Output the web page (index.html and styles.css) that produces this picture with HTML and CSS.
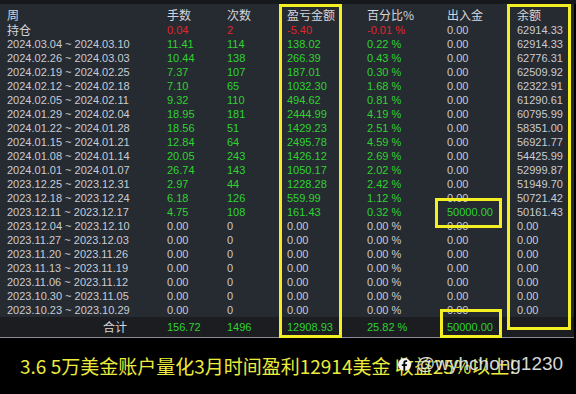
FILE: index.html
```html
<!DOCTYPE html>
<html lang="zh">
<head>
    <meta charset="UTF-8">
    <title>周报表</title>
    <link rel="stylesheet" href="styles.css">
</head>
<body>
    <div class="screen">
        <div class="topbar"></div>
        <div class="panel">
            <div class="row head">
                <span>周</span><span>手数</span><span>次数</span><span>盈亏金额</span><span>百分比%</span><span>出入金</span><span>余额</span>
            </div>
            <div class="row">
                <span class="cjk">持仓</span><span class="red">0.04</span><span class="red">2</span><span class="red">-5.40</span><span class="red">-0.01 %</span><span>0.00</span><span>62914.33</span>
            </div>
            <div class="row g"><span>2024.03.04 ~ 2024.03.10</span><span>11.41</span><span>114</span><span>138.02</span><span>0.22 %</span><span>0.00</span><span>62914.33</span></div>
            <div class="row g"><span>2024.02.26 ~ 2024.03.03</span><span>10.44</span><span>138</span><span>266.39</span><span>0.43 %</span><span>0.00</span><span>62776.31</span></div>
            <div class="row g"><span>2024.02.19 ~ 2024.02.25</span><span>7.37</span><span>107</span><span>187.01</span><span>0.30 %</span><span>0.00</span><span>62509.92</span></div>
            <div class="row g"><span>2024.02.12 ~ 2024.02.18</span><span>7.10</span><span>65</span><span>1032.30</span><span>1.68 %</span><span>0.00</span><span>62322.91</span></div>
            <div class="row g"><span>2024.02.05 ~ 2024.02.11</span><span>9.32</span><span>110</span><span>494.62</span><span>0.81 %</span><span>0.00</span><span>61290.61</span></div>
            <div class="row g"><span>2024.01.29 ~ 2024.02.04</span><span>18.95</span><span>181</span><span>2444.99</span><span>4.19 %</span><span>0.00</span><span>60795.99</span></div>
            <div class="row g"><span>2024.01.22 ~ 2024.01.28</span><span>18.56</span><span>51</span><span>1429.23</span><span>2.51 %</span><span>0.00</span><span>58351.00</span></div>
            <div class="row g"><span>2024.01.15 ~ 2024.01.21</span><span>12.84</span><span>64</span><span>2495.78</span><span>4.59 %</span><span>0.00</span><span>56921.77</span></div>
            <div class="row g"><span>2024.01.08 ~ 2024.01.14</span><span>20.05</span><span>243</span><span>1426.12</span><span>2.69 %</span><span>0.00</span><span>54425.99</span></div>
            <div class="row g"><span>2024.01.01 ~ 2024.01.07</span><span>26.74</span><span>143</span><span>1050.17</span><span>2.02 %</span><span>0.00</span><span>52999.87</span></div>
            <div class="row g"><span>2023.12.25 ~ 2023.12.31</span><span>2.97</span><span>44</span><span>1228.28</span><span>2.42 %</span><span>0.00</span><span>51949.70</span></div>
            <div class="row g"><span>2023.12.18 ~ 2023.12.24</span><span>6.18</span><span>126</span><span>559.99</span><span>1.12 %</span><span>0.00</span><span>50721.42</span></div>
            <div class="row g"><span>2023.12.11 ~ 2023.12.17</span><span>4.75</span><span>108</span><span>161.43</span><span>0.32 %</span><span class="green">50000.00</span><span>50161.43</span></div>
            <div class="row"><span>2023.12.04 ~ 2023.12.10</span><span>0.00</span><span>0</span><span>0.00</span><span>0.00 %</span><span>0.00</span><span>0.00</span></div>
            <div class="row"><span>2023.11.27 ~ 2023.12.03</span><span>0.00</span><span>0</span><span>0.00</span><span>0.00 %</span><span>0.00</span><span>0.00</span></div>
            <div class="row"><span>2023.11.20 ~ 2023.11.26</span><span>0.00</span><span>0</span><span>0.00</span><span>0.00 %</span><span>0.00</span><span>0.00</span></div>
            <div class="row"><span>2023.11.13 ~ 2023.11.19</span><span>0.00</span><span>0</span><span>0.00</span><span>0.00 %</span><span>0.00</span><span>0.00</span></div>
            <div class="row"><span>2023.11.06 ~ 2023.11.12</span><span>0.00</span><span>0</span><span>0.00</span><span>0.00 %</span><span>0.00</span><span>0.00</span></div>
            <div class="row"><span>2023.10.30 ~ 2023.11.05</span><span>0.00</span><span>0</span><span>0.00</span><span>0.00 %</span><span>0.00</span><span>0.00</span></div>
            <div class="row"><span>2023.10.23 ~ 2023.10.29</span><span>0.00</span><span>0</span><span>0.00</span><span>0.00 %</span><span>0.00</span><span>0.00</span></div>
            <div class="row total">
                <span class="cjk sum">合计</span><span class="green">156.72</span><span class="green">1496</span><span class="green">12908.93</span><span class="green">25.82 %</span><span class="green">50000.00</span><span></span>
            </div>
        </div>

        <p class="caption">3.6 5万美金账户量化3月时间盈利12914美金 收益25%以上!</p>

        <div class="mark">
            <svg width="13" height="13" viewBox="0 0 13 13">
                <circle cx="6.5" cy="6.5" r="6.5" fill="#f2f2f2"/>
                <path d="M7.2 13V8.1h1.6l.25-1.9H7.2V5c0-.55.16-.9.93-.9h1V2.4c-.17-.02-.75-.07-1.4-.07-1.4 0-2.33.85-2.33 2.4v1.45H3.8v1.9h1.6V13z" fill="#000"/>
            </svg>
            <span>@wyhchong1230</span>
        </div>

        <div class="box box-pnl"></div>
        <div class="box box-bal"></div>
        <div class="box box-dep"></div>
        <div class="box box-sum"></div>
    </div>
</body>
</html>
```

FILE: styles.css
```css
* {
    margin: 0;
    padding: 0;
    box-sizing: border-box;
}
body {
    background-color: #000;
    font-family: "Liberation Sans", Arial, "Noto Sans CJK SC", sans-serif;
    color: #c9ccd3;
}
.screen {
    position: relative;
    width: 576px;
    height: 394px;
    overflow: hidden;
}
.topbar {
    height: 4px;
    background-color: #16181c;
}
.panel {
    width: 574px;
    background-color: #262a31;
    border-bottom: 1px solid #8a8d93;
}
.row {
    display: grid;
    grid-template-columns: 160px 60px 60px 80px 80px 70px 1fr;
    height: 14px;
    line-height: 14px;
    padding-left: 7px;
    font-size: 11px;
    white-space: nowrap;
}
.row.head {
    height: 19px;
    padding-top: 3px;
    font-size: 12px;
    line-height: 15px;
    font-family: "Noto Sans CJK SC", sans-serif;
    color: #d3d6dc;
}
.cjk {
    font-family: "Noto Sans CJK SC", sans-serif;
    font-size: 12px;
    color: #d3d6dc;
}
.row.g span:nth-child(n+2):nth-child(-n+5) {
    color: #2fd22f;
}
.red {
    color: #e0262a;
}
.green {
    color: #2fd22f;
}
.row.total {
    height: 20px;
    line-height: 20px;
    background-color: #1b1d21;
}
.sum {
    text-align: right;
    padding-right: 40px;
}
.caption {
    margin-top: 16px;
    padding-left: 20px;
    font-family: "Noto Sans CJK SC", sans-serif;
    font-size: 19px;
    line-height: 24px;
    color: #ecec3c;
    white-space: nowrap;
}
.mark {
    position: absolute;
    left: 398px;
    top: 353px;
    display: flex;
    align-items: center;
    gap: 5px;
    font-family: "Liberation Sans", Arial, sans-serif;
    font-size: 19px;
    line-height: 22px;
    color: rgba(255, 255, 255, 0.85);
    text-shadow: 0 0 2px rgba(0, 0, 0, 0.6);
}
.mark svg {
    display: block;
}
.box {
    position: absolute;
    border: 3px solid #f3ef22;
}
.box-pnl {
    left: 279px;
    top: 4px;
    width: 63px;
    height: 334px;
}
.box-bal {
    left: 507px;
    top: 4px;
    width: 64px;
    height: 326px;
}
.box-dep {
    left: 435px;
    top: 198px;
    width: 67px;
    height: 30px;
}
.box-sum {
    left: 440px;
    top: 309px;
    width: 62px;
    height: 29px;
}
```
